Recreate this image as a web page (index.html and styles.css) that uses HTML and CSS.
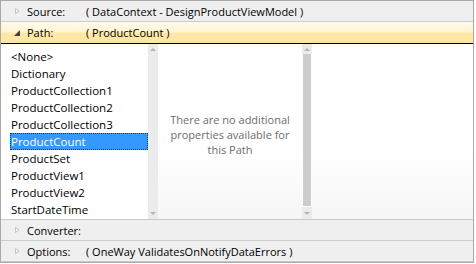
FILE: index.html
```html
<!DOCTYPE html>
<html lang="en">
<head>
    <meta charset="UTF-8">
    <title>Binding Path</title>
    <link rel="stylesheet" href="styles.css">
</head>
<body>
    <div class="panel">
        <div class="row">
            <svg class="arrow" width="8" height="8" viewBox="0 0 8 8"><path d="M2.5 1.5 L6 4 L2.5 6.5 Z" fill="#fff" stroke="#c4c4c4"/></svg>
            <span class="label">Source:</span>
            <span class="value">( DataContext - DesignProductViewModel )</span>
        </div>
        <div class="row open">
            <svg class="arrow" width="8" height="8" viewBox="0 0 8 8"><path d="M1 7 L7 7 L7 1 Z" fill="#404040"/></svg>
            <span class="label">Path:</span>
            <span class="value">( ProductCount )</span>
        </div>
        <div class="content">
            <ul class="list">
                <li>&lt;None&gt;</li>
                <li>Dictionary</li>
                <li>ProductCollection1</li>
                <li>ProductCollection2</li>
                <li>ProductCollection3</li>
                <li class="selected">ProductCount</li>
                <li>ProductSet</li>
                <li>ProductView1</li>
                <li>ProductView2</li>
                <li>StartDateTime</li>
            </ul>
            <div class="scrollbar">
                <span class="up"></span>
                <span class="track"></span>
                <span class="down"></span>
            </div>
            <div class="props">
                <p>There are no additional properties available for this Path</p>
            </div>
            <div class="scrollbar">
                <span class="up"></span>
                <span class="track thumb"></span>
                <span class="down"></span>
            </div>
            <div class="blank"></div>
        </div>
        <div class="row">
            <svg class="arrow" width="8" height="8" viewBox="0 0 8 8"><path d="M2.5 1.5 L6 4 L2.5 6.5 Z" fill="#fff" stroke="#c4c4c4"/></svg>
            <span class="label">Converter:</span>
        </div>
        <div class="row">
            <svg class="arrow" width="8" height="8" viewBox="0 0 8 8"><path d="M2.5 1.5 L6 4 L2.5 6.5 Z" fill="#fff" stroke="#c4c4c4"/></svg>
            <span class="label">Options:</span>
            <span class="value">( OneWay ValidatesOnNotifyDataErrors )</span>
        </div>
    </div>
</body>
</html>
```

FILE: styles.css
```css
body {
    margin: 0;
    padding: 0;
    background: #ffffff;
    font-family: "Open Sans", Arial, sans-serif;
    font-size: 11px;
    color: #000000;
}
.panel {
    width: 472px;
    height: 261px;
    border: 1px solid #a9a9a9;
    display: flex;
    flex-direction: column;
}
.row {
    height: 20px;
    display: flex;
    align-items: center;
    background: #efefef;
    border-bottom: 1px solid #cbcbcb;
}
.row.open {
    height: 21px;
    background: linear-gradient(#fffbeb, #fff4d2 45%, #fee8a6 55%, #fde6a2);
    border-bottom: 1px solid #000000;
}
.arrow {
    margin-left: 12px;
    margin-right: 6px;
}
.label {
    width: 59px;
}
.content {
    height: 175px;
    display: flex;
    border-bottom: 1px solid #cbcbcb;
}
.list {
    width: 147px;
    margin: 0;
    padding: 4px 0 0 0;
    list-style: none;
    background: #ffffff;
    font-size: 11.5px;
}
.list li {
    height: 17px;
    line-height: 17px;
    padding-left: 10px;
    white-space: nowrap;
}
.list li.selected {
    margin-left: 9px;
    padding-left: 1px;
    background: #3399ff;
    color: #ffffff;
    outline: 1px dotted #1b3a6b;
    outline-offset: -1px;
}
.scrollbar {
    width: 10px;
    background: #ebebeb;
    display: flex;
    flex-direction: column;
}
.scrollbar .up,
.scrollbar .down {
    height: 10px;
    position: relative;
}
.scrollbar .up::after,
.scrollbar .down::after {
    content: "";
    position: absolute;
    left: 2px;
    border-left: 3px solid transparent;
    border-right: 3px solid transparent;
}
.scrollbar .up::after {
    top: 4px;
    border-bottom: 3px solid #b4b4b4;
}
.scrollbar .down::after {
    top: 3px;
    border-top: 3px solid #b4b4b4;
}
.scrollbar .track {
    flex: 1;
}
.scrollbar .thumb {
    background: #cdcdcd;
    border: 1px solid #ffffff;
    border-top: none;
    margin-bottom: 2px;
}
.props {
    width: 144px;
    display: flex;
    align-items: center;
    justify-content: center;
    background: linear-gradient(#ffffff 60%, #f6f6f6);
}
.props p {
    margin: 6px 0 0 0;
    padding: 0 10px;
    text-align: center;
    color: #6d6d6d;
    line-height: 15px;
}
.blank {
    flex: 1;
    background: linear-gradient(#ffffff 60%, #f6f6f6);
}
```
